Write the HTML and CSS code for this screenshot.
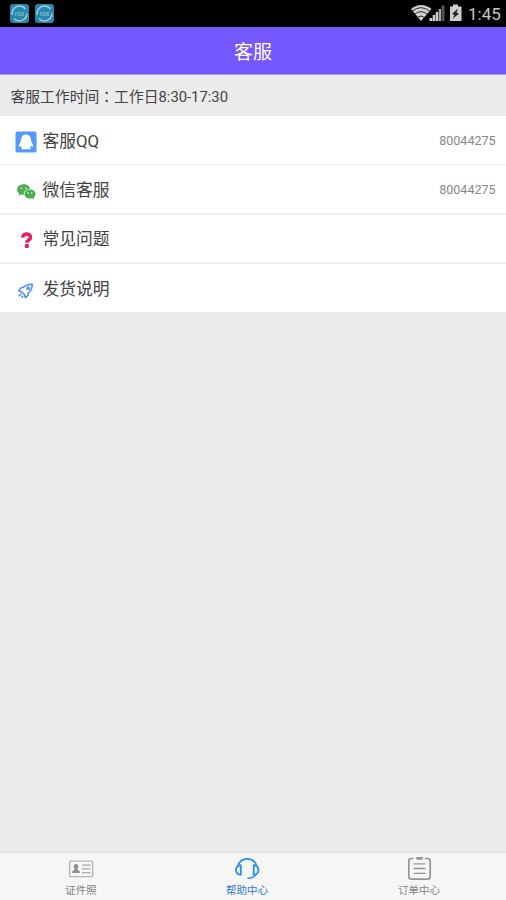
FILE: index.html
```html
<!DOCTYPE html>
<html lang="zh-CN">
<head>
<meta charset="utf-8">
<title>客服</title>
<link rel="stylesheet" href="styles.css">
</head>
<body>
<div class="status">
  <div class="apps">
    <svg class="app" viewBox="0 0 19 19"><rect width="19" height="19" rx="3" fill="#2688ae"/><circle cx="9.5" cy="9.5" r="7.500" fill="none" stroke="#a9cbd8" stroke-width="1.500" stroke-dasharray="18 4 20 5"/><text x="9.5" y="11.7" text-anchor="middle">rox</text></svg>
    <svg class="app" viewBox="0 0 19 19"><rect width="19" height="19" rx="3" fill="#2688ae"/><circle cx="9.5" cy="9.5" r="7.500" fill="none" stroke="#a9cbd8" stroke-width="1.500" stroke-dasharray="18 4 20 5"/><text x="9.5" y="11.7" text-anchor="middle">rox</text></svg>
  </div>
  <svg class="signals" width="54" height="20" viewBox="0 0 54 20">
    <path d="M1 6Q11-2 21.500 6L11 18Z" fill="#cfcfcf"/>
    <path d="M2 8.300Q11 1 20 8.300M4.500 11.300Q11 6 17.500 11.300M7.500 14.400Q11 11.500 14.500 14.400" fill="none" stroke="#000" stroke-width=".8"/>
    <path d="M19.500 18v-3h2.700v3zM22.700 18v-6h2.500v6zM25.700 18V9h2.600v9z" fill="#cfcfcf"/>
    <path d="M28.800 18V6H31v12z" fill="#aaa"/>
    <path d="M31.500 18V2.500h3v15.500z" fill="#555"/>
    <path d="M43 1.500h5v2h3.500v14.500H40V3.500h3z" fill="#cfcfcf"/>
    <path d="M48 5.500l-6 5.500 2.500.8-2 4.200 6.500-5.500-2.500-.7z" fill="#222"/>
  </svg>
  <span class="clock">1:45</span>
</div>
<header class="title">客服</header>
<div class="hours">客服工作时间<span class="colon" lang="zh-TW">：</span>工作日8:30-17:30</div>
<main class="list">
  <div class="row">
    <svg class="icon" viewBox="0 0 22 22"><rect x=".5" y=".5" width="21" height="21" rx="2" fill="#529bfb"/><path d="M11 3.500C8 3.500 6.200 5.800 6.200 8.500c0 2-2.500 4-2.300 7 .2.700 1 .3 1.800-.8.200 1 .6 1.500 1.300 2-1.300.4-1.200 1.500.7 1.500h6.600c1.900 0 2-1.100.7-1.500.7-.5 1.100-1 1.300-2 .8 1.100 1.600 1.500 1.800.8.200-3-2.300-5-2.300-7 0-2.700-1.800-5-4.800-5z" fill="#fff"/></svg>
    <span class="label">客服QQ</span><span class="value">80044275</span>
  </div>
  <div class="row">
    <svg class="icon" viewBox="0 0 22 22"><g fill="#4caf50"><path d="M8.800 4.200c-3.900 0-6.700 2.400-6.700 5.500 0 1.700.9 3 2.300 4l-.7 2.300 2.600-1.500c.8.300 1.600.4 2.500.4-.5-3.300 2-5.800 6.300-5.800-.4-2.900-3.100-4.900-6.300-4.900z"/><ellipse cx="15" cy="14.100" rx="5.600" ry="4.600"/><path d="M15.500 17l3.500 2.500-.3-3.500z"/></g><g fill="#fff"><circle cx="6.500" cy="8.300" r=".8"/><circle cx="10.800" cy="8.300" r=".8"/><circle cx="13.100" cy="13" r=".7"/><circle cx="16.800" cy="13" r=".7"/></g></svg>
    <span class="label">微信客服</span><span class="value">80044275</span>
  </div>
  <div class="row">
    <svg class="icon" viewBox="0 0 22 22"><path d="M7.700 8.600C7.800 3.800 15.500 3.900 15.500 8.200c0 3-3.700 2.500-3.700 5.500" fill="none" stroke="#e91e63" stroke-width="3.500"/><rect x="9.800" y="15" width="4" height="4" rx="1" fill="#e91e63"/></svg>
    <span class="label">常见问题</span>
  </div>
  <div class="row">
    <svg class="icon" viewBox="0 0 22 22"><g fill="none" stroke="#4a90f5" stroke-width="1.500" stroke-linejoin="round" stroke-linecap="round"><path d="M17.200 5.200c-4-.2-6.500.7-9 3.400H6.500l-2.900 3.200 3 1 3 3 .8 2.900 2.800-2.500v-2c2.700-2.500 4.200-5 4-9z"/><circle cx="13.200" cy="9.200" r="1.100"/><path d="M6 15l-1.700 1.700M7.800 17.200l-.9.900"/></g></svg>
    <span class="label">发货说明</span>
  </div>
</main>
<nav class="tabs">
  <div class="tab">
    <svg class="tab-icon" viewBox="0 0 26 26"><rect x="1.600" y="5.100" width="23" height="15.500" rx="1" fill="none" stroke="#b5b5b5" stroke-width="1.400"/><path d="M8 8c-1.500 0-2.300 1-2.300 2.400 0 1.200.6 2.200 1.200 2.700-.2.900-2.700 1.200-2.700 3.900H12c0-2.700-2.700-3-2.900-3.900.7-.5 1.200-1.500 1.200-2.700C10.300 9 9.500 8 8 8z" fill="#909090"/><path d="M14 9.200h8.500M14 12.900h8.500M14 16.700h8.500" stroke="#aaa" stroke-width="1.300"/></svg>
    <span>证件照</span>
  </div>
  <div class="tab active">
    <svg class="tab-icon" viewBox="0 0 26 26"><g fill="none" stroke="#2491f3" stroke-width="1.800"><path d="M4 10.500C5 .3 21.500.3 22.500 10.500"/><path d="M6.800 9.300c-6.400-.7-6.400 10 0 9.300zM19.700 9.300c6.400-.7 6.400 10 0 9.300z"/><path d="M21.800 18.200c-1 2.900-3.500 4-8.300 4.100" stroke-width="1.400"/></g></svg>
    <span>帮助中心</span>
  </div>
  <div class="tab">
    <svg class="tab-icon" viewBox="0 0 26 26"><g fill="none" stroke="#959595" stroke-width="1.700" stroke-linecap="round"><path d="M7 2.500H5Q2.800 2.500 2.800 5.500v14.700Q2.800 23.200 5.500 23.200h16q2.700 0 2.700-3V5.500Q24.200 2.500 21.500 2.500h-2"/><path d="M11.500 2.300h4" stroke-width="2.800"/><path d="M8 7.800h11M8 12.500h11M8 17.300h11" stroke-width="1.300"/></g></svg>
    <span>订单中心</span>
  </div>
</nav>
</body>
</html>
```
FILE: styles.css
```css
* { box-sizing: border-box; }
body {
  margin: 0;
  height: 900px;
  display: flex;
  flex-direction: column;
  overflow: hidden;
  background: #ebebeb;
  color: #444;
  font-family: Roboto, "Noto Sans CJK SC", sans-serif;
}
.status {
  height: 27px;
  display: flex;
  align-items: center;
  padding: 0 6px 0 10px;
  background: #000;
}
.apps { display: flex; gap: 6px; margin-right: auto; }
.app { width: 19px; height: 19px; }
.app text { font: 7px Roboto, sans-serif; fill: #9cc5d5; }
.signals { margin: -1px 4px 0 0; }
.clock { width: 32px; font-size: 17px; line-height: 27px; padding-top: 1px; color: #c4c4c4; white-space: nowrap; }
.title {
  height: 48px;
  padding-top: 2px;
  background: #7558ff;
  border-bottom: 1px solid #a899f5;
  color: #fff;
  font-size: 19px;
  line-height: 48px;
  text-align: center;
}
.hours { height: 41px; padding-left: 10.500px; font-size: 14.800px; line-height: 44px; }
.colon { font-family: "Noto Sans CJK TC", sans-serif; line-height: 1; }
.list {
  height: 195.500px;
  display: grid;
  grid-template-rows: repeat(4, 1fr);
  row-gap: 1.600px;
  background: #efefef;
}
.row { display: flex; align-items: center; padding: 0 10.500px 0 15.400px; background: #fff; }
.icon { width: 22px; height: 22px; margin: 4px 5px 0 0; }
.label { font-size: 16.800px; line-height: 24px; padding-top: 2px; }
.value { margin-left: auto; padding-top: 1px; color: #888; font-size: 12.500px; }
.tabs {
  height: 48px;
  margin-top: auto;
  display: grid;
  grid-template-columns: 162px 170px 174px;
  border-top: 1px solid #e2e2e2;
  background: #f6f6f6;
}
.tab { display: flex; flex-direction: column; align-items: center; padding-top: 3px; font-size: 10.500px; line-height: 16px; color: #858585; }
.tab-icon { width: 26px; height: 26px; margin-bottom: 1px; }
.active { color: #3378d4; }
```
